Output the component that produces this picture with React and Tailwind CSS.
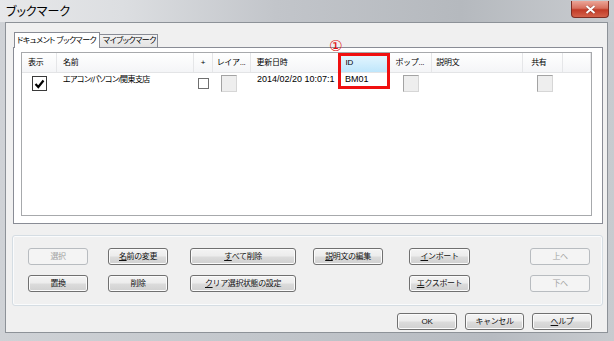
import React from 'react'

const font = "font-['Liberation_Sans','Noto_Sans_CJK_JP',sans-serif]"

function Btn({ children, w, disabled }) {
  return (
    <div
      className={`h-[17px] flex items-center justify-center rounded-[3px] border text-[8px] tracking-[-0.4px] ${
        disabled
          ? 'border-[#b8bcc0] bg-[#f4f4f4] text-[#a3a3a3]'
          : 'border-[#707070] bg-[linear-gradient(#f4f4f4_0%,#ececec_48%,#dcdcdc_52%,#d0d0d0_100%)] text-[#111] shadow-[inset_0_0_0_1px_#fbfbfb]'
      }`}
      style={{ width: w }}
    >
      {children}
    </div>
  )
}

function U({ children }) {
  return <span className="underline underline-offset-1">{children}</span>
}

function GrayBox() {
  return <div className="w-[16px] h-[17px] border border-[#a3a3a3] border-r-[#d6d6d6] border-b-[#d6d6d6] bg-[#eeeeee]" />
}

const cols = [
  { label: '表示', w: 35, pl: 6 },
  { label: '名前', w: 137, pl: 6 },
  { label: '+', w: 19, pl: 7 },
  { label: 'レイア...', w: 38, pl: 4 },
  { label: '更新日時', w: 89, pl: 6 },
  { label: 'ID', w: 50, pl: 6, hot: true },
  { label: 'ポップ...', w: 43, pl: 6 },
  { label: '説明文', w: 91, pl: 4 },
  { label: '共有', w: 40, pl: 8 },
  { label: '', w: 28, pl: 0 },
]

export default function App() {
  return (
    <div className={`w-[614px] h-[341px] flex flex-col bg-[linear-gradient(90deg,#cfd2d6,#c3c7cc_40%,#b7bbc1_80%,#c8cbcf)] overflow-hidden relative ${font}`}>
      {/* title bar */}
      <div className="h-[22px] flex items-start justify-between bg-[linear-gradient(90deg,#e7e8ea_0%,#dcdee1_20%,#c2c5ca_45%,#b5b9be_75%,#c9ccd0_100%)]">
        <span className="pl-[6px] pt-[3px] text-[12px] leading-[16px] text-black [font-feature-settings:'palt'] font-['Noto_Sans_CJK_JP',sans-serif]">
          ブックマーク
        </span>
        <div className="mr-[5px] mt-[1px] w-[38px] h-[17px] rounded-b-[4px] border border-[#7d2e24] border-t-0 bg-[linear-gradient(#eba597_0%,#d8705e_45%,#c13b27_55%,#d4624b_100%)] flex items-center justify-center">
          <svg width="11" height="9" viewBox="0 0 11 9">
            <path d="M1.5 1 L9.5 8 M9.5 1 L1.5 8" stroke="#4a1a14" strokeWidth="3" opacity="0.4" />
            <path d="M1.5 1 L9.5 8 M9.5 1 L1.5 8" stroke="#fff" strokeWidth="2" />
          </svg>
        </div>
      </div>

      {/* client area */}
      <div className="ml-[5px] mr-[6px] mb-[8px] flex-1 bg-[#f0f0f0] border border-[#8d9298] flex flex-col">
        {/* tabs */}
        <div className="flex items-end h-[24px] pl-[8px]">
          <div className="h-[16px] w-[86px] border border-b-0 border-[#898c95] bg-white relative -mb-px z-10 flex items-center pl-[2px] text-[8px] tracking-[-0.5px] [font-feature-settings:'palt']">
            ドキュメント ブックマーク
          </div>
          <div className="h-[13px] w-[58px] border border-b-0 border-l-0 border-[#898c95] bg-[linear-gradient(#f3f3f3,#e3e3e3)] flex items-center pl-[3px] text-[8px] tracking-[-0.5px] [font-feature-settings:'palt']">
            マイブックマーク
          </div>
        </div>

        {/* tab panel */}
        <div className="ml-[7px] w-[590px] h-[177px] border border-[#898c95] bg-white pl-[7px] pt-[4px] relative">
          <div className="w-[571px] h-[164px] border border-[#a7a9ac] bg-white flex flex-col">
            {/* header */}
            <div className="flex h-[20px] bg-[linear-gradient(#ffffff,#f4f5f7)] border-b border-[#e3e4e6]">
              {cols.map((c, i) => (
                <div
                  key={i}
                  className={`h-full flex items-center text-[8px] tracking-[-0.3px] whitespace-nowrap overflow-hidden border-r ${
                    c.hot
                      ? 'bg-[linear-gradient(#e9f8ff,#bfe6fb)] border-[#93c6e0]'
                      : 'border-[#e5e6e8]'
                  }`}
                  style={{ width: c.w, paddingLeft: c.pl }}
                >
                  {c.label}
                </div>
              ))}
            </div>
            {/* row */}
            <div className="flex h-[20px] items-start text-[9px] leading-[11px]">
              <div className="w-[35px] pl-[10px] pt-[3px]">
                <div className="w-[15px] h-[15px] border border-[#3a3a3a] bg-white flex items-center justify-center">
                  <svg width="11" height="10" viewBox="0 0 11 10">
                    <path d="M1.5 5 L4.3 8 L9.5 1.5" fill="none" stroke="#000" strokeWidth="2.2" />
                  </svg>
                </div>
              </div>
              <div className="w-[137px] pl-[6px] pt-[1px] text-[8px] tracking-[-0.6px] [font-feature-settings:'palt'] whitespace-nowrap">
                エアコン/パソコン/関東支店
              </div>
              <div className="w-[19px] pl-[4px] pt-[5px]">
                <div className="w-[11px] h-[11px] border border-[#6f6f6f] bg-white" />
              </div>
              <div className="w-[38px] pl-[8px] pt-[2px]">
                <GrayBox />
              </div>
              <div className="w-[89px] pl-[6px] pt-[1px] whitespace-nowrap overflow-hidden">2014/02/20 10:07:1</div>
              <div className="w-[50px] pl-[5px] pt-[1px]">BM01</div>
              <div className="w-[43px] pl-[13px] pt-[2px]">
                <GrayBox />
              </div>
              <div className="w-[91px]" />
              <div className="w-[40px] pl-[13px] pt-[2px]">
                <GrayBox />
              </div>
            </div>
          </div>
          {/* annotation */}
          <div className="absolute left-[324px] top-[5px] w-[52px] h-[36px] border-[3px] border-[#f01010]" />
          <div className="absolute left-[315px] -top-[9px] text-[15px] leading-[15px] text-[#e01010] font-['DejaVu_Sans',sans-serif]">
            ①
          </div>
        </div>

        {/* group box */}
        <div className="ml-[6px] mt-[11px] w-[591px] h-[71px] rounded-[3px] border border-[#d5dde3] shadow-[inset_0_0_0_1px_#fafbfc] flex pl-[15px] pt-[12px]">
          <div className="flex flex-col gap-[10px]">
            <Btn w={60} disabled>選択</Btn>
            <Btn w={60}>置換</Btn>
          </div>
          <div className="flex flex-col gap-[10px] ml-[20px]">
            <Btn w={60}><U>名</U>前の変更</Btn>
            <Btn w={60}>削除</Btn>
          </div>
          <div className="flex flex-col gap-[10px] ml-[22px]">
            <Btn w={106}><U>す</U>べて削除</Btn>
            <Btn w={106}><U>ク</U>リア選択状態の設定</Btn>
          </div>
          <div className="flex flex-col gap-[10px] ml-[17px]">
            <Btn w={70}><U>説</U>明文の編集</Btn>
          </div>
          <div className="flex flex-col gap-[10px] ml-[26px]">
            <Btn w={61}><U>イ</U>ンポート</Btn>
            <Btn w={61}><U>エ</U>クスポート</Btn>
          </div>
          <div className="flex flex-col gap-[10px] ml-[60px]">
            <Btn w={60} disabled>上へ</Btn>
            <Btn w={60} disabled>下へ</Btn>
          </div>
        </div>

        {/* dialog buttons */}
        <div className="flex justify-end gap-[8px] pr-[15px] mt-[7px]">
          <Btn w={60}>OK</Btn>
          <Btn w={59}>キャンセル</Btn>
          <Btn w={60}><U>ヘ</U>ルプ</Btn>
        </div>
      </div>
    </div>
  )
}
